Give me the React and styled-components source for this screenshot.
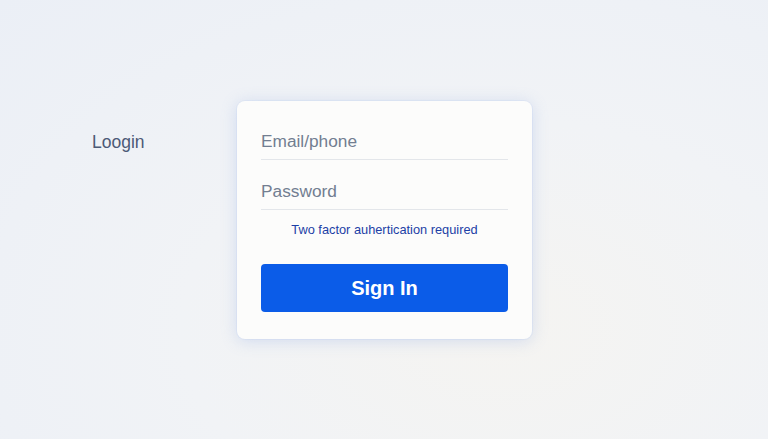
import React from "react";
import styled, { createGlobalStyle } from "styled-components";

const Global = createGlobalStyle`
  html, body { margin: 0; padding: 0; }
  body {
    background: #eef1f6;
    font-family: "Liberation Sans", Arial, sans-serif;
  }
`;

const Page = styled.div`
  width: 768px;
  height: 439px;
  box-sizing: border-box;
  padding: 101px 0 0 92px;
  display: flex;
  align-items: flex-start;
  background: radial-gradient(ellipse at 65% 75%, #f5f4f1 0%, #f1f3f6 45%, #ebeff6 100%);
  overflow: hidden;
`;

const Label = styled.div`
  width: 145px;
  margin-top: 30px;
  font-size: 17.5px;
  line-height: 22px;
  color: #4c5a77;
`;

const Card = styled.form`
  width: 295px;
  box-sizing: border-box;
  padding: 9px 24px 27px;
  background: #fcfcfb;
  border-radius: 8px;
  box-shadow: 0 2px 16px rgba(130, 160, 225, 0.3), 0 0 0 1px rgba(220, 228, 244, 0.45);
  display: flex;
  flex-direction: column;
`;

const Field = styled.input`
  display: block;
  width: 100%;
  box-sizing: border-box;
  border: none;
  border-bottom: 1px solid #e3e6ea;
  background: transparent;
  padding: 19px 0 6px;
  height: 50px;
  font-family: inherit;
  font-size: 17.3px;
  line-height: 24px;
  color: #333;
  outline: none;
  &::placeholder { color: #727e91; }
`;

const Note = styled.div`
  margin-top: 12px;
  text-align: center;
  font-size: 12.8px;
  line-height: 16px;
  color: #1d3fa6;
`;

const Button = styled.button`
  margin-top: 26px;
  height: 48px;
  border: none;
  border-radius: 4px;
  background: #0b5ce8;
  color: #fff;
  font-family: inherit;
  font-weight: 700;
  font-size: 20px;
  cursor: pointer;
`;

export default function App() {
  return (
    <>
      <Global />
      <Page>
        <Label>Loogin</Label>
        <Card onSubmit={(e) => e.preventDefault()}>
          <Field type="text" placeholder="Email/phone" />
          <Field type="password" placeholder="Password" />
          <Note>Two factor auhertication required</Note>
          <Button type="submit">Sign In</Button>
        </Card>
      </Page>
    </>
  );
}
